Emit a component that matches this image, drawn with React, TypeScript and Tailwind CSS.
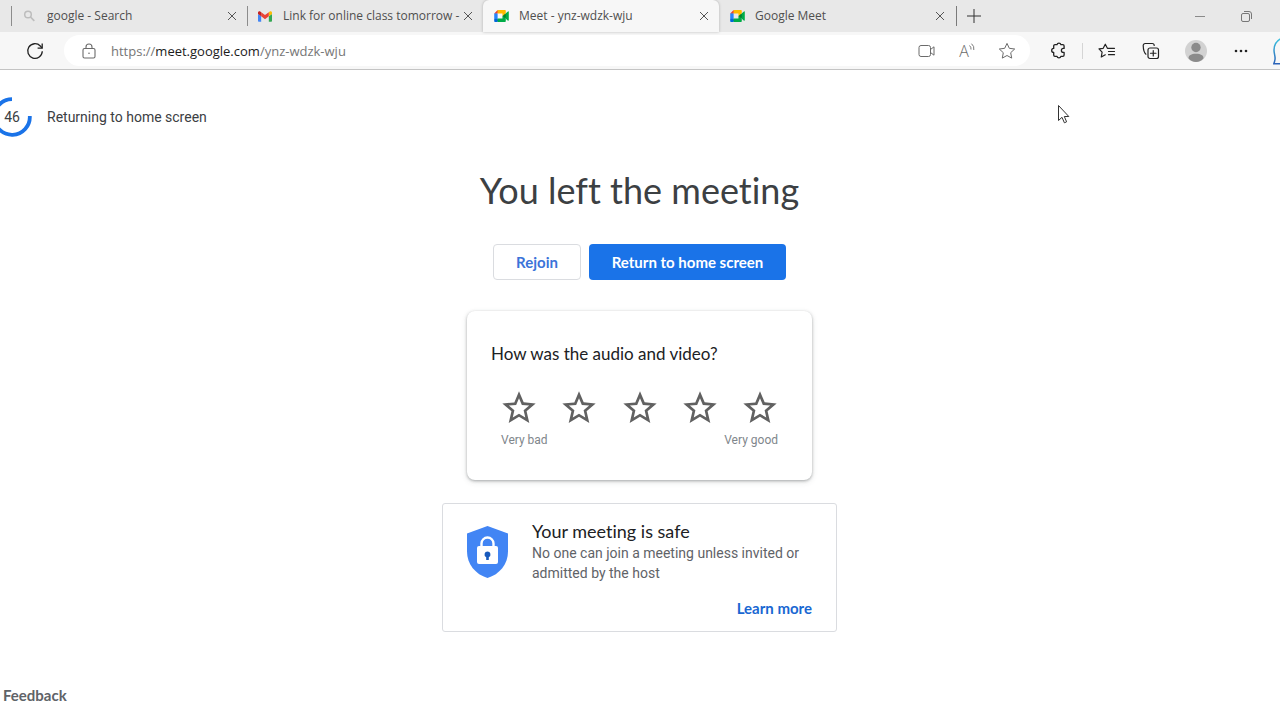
import type { ReactNode } from "react";

const CHROME_FONT = "font-['Open_Sans','Noto_Sans',sans-serif]";
const DISPLAY_FONT = "font-['Lato',sans-serif] [font-variant-ligatures:no-common-ligatures]";

function MeetLogo() {
  return (
    <svg viewBox="0 0 87.5 72" className="h-3 w-[15px]" aria-hidden="true">
      <path fill="#00832d" d="M49.5 36l8.53 9.75 11.47 7.33 2-17.02-2-16.64-11.69 6.44z" />
      <path fill="#0066da" d="M0 51.5V66c0 3.315 2.685 6 6 6h14.5l3-10.96-3-9.54-9.95-3z" />
      <path fill="#e94235" d="M20.5 0L0 20.5l10.55 3 9.95-3 2.95-9.41z" />
      <path fill="#2684fc" d="M20.5 20.5H0v31h20.5z" />
      <path
        fill="#00ac47"
        d="M82.6 8.68L69.5 19.42v33.66l13.16 10.79c1.97 1.54 4.85.135 4.85-2.37V11c0-2.535-2.945-3.925-4.91-2.32zM49.5 36v15.5h-29V72h43c3.315 0 6-2.685 6-6V53.08z"
      />
      <path fill="#ffba00" d="M63.5 0h-43v20.5h29V36l20-16.57V6c0-3.315-2.685-6-6-6z" />
    </svg>
  );
}

function GmailLogo() {
  return (
    <svg viewBox="52 42 88 66" className="h-[11px] w-[14px]" aria-hidden="true">
      <path fill="#4285f4" d="M58 108h14V74L52 59v43c0 3.320 2.690 6 6 6" />
      <path fill="#34a853" d="M120 108h14c3.320 0 6-2.690 6-6V59l-20 15" />
      <path fill="#fbbc04" d="M120 48v26l20-15v-8c0-7.420-8.470-11.650-14.400-7.200" />
      <path fill="#ea4335" d="M72 74V48l24 18 24-18v26L96 92" />
      <path fill="#c5221f" d="M52 51v8l20 15V48l-5.600-4.200c-5.940-4.450-14.400-.220-14.400 7.200" />
    </svg>
  );
}

function SearchGlyph() {
  return (
    <svg viewBox="0 0 14 14" className="h-3.5 w-3.5" fill="none" stroke="#bdbdbd" aria-hidden="true">
      <circle cx="6" cy="5.500" r="3.300" strokeWidth="1.500" />
      <path d="M8.500 8l3.800 3.800" strokeWidth="1.700" />
    </svg>
  );
}

interface TabProps {
  title: string;
  icon: ReactNode;
  variant?: "divided" | "active" | "plain";
}

const TAB_STYLES = {
  divided:
    "before:absolute before:left-0 before:top-1.5 before:h-5 before:w-px before:bg-[#8c8c8c]",
  active: "rounded-t-md bg-[#f7f7f7] shadow-[0_0_3px_rgba(0,0,0,0.25)]",
  plain: "",
};

function Tab({ title, icon, variant = "divided" }: TabProps) {
  return (
    <div
      className={`relative flex min-w-0 flex-[0_1_236px] items-center pl-[11px] pr-[7px] ${TAB_STYLES[variant]}`}
    >
      <button
        role="tab"
        aria-selected={variant === "active"}
        className="flex h-full min-w-0 flex-1 items-center text-left text-xs text-[#4f4f4f]"
      >
        <span className="flex w-[25px] shrink-0 items-center">{icon}</span>
        <span className="min-w-0 flex-1 overflow-hidden whitespace-nowrap">{title}</span>
      </button>
      <button aria-label={`Close ${title}`} className="flex h-4 w-4 shrink-0 items-center justify-center">
        <svg viewBox="0 0 10 10" className="h-2.5 w-2.5" stroke="#555" aria-hidden="true">
          <path d="M1 1l8 8M9 1L1 9" />
        </svg>
      </button>
    </div>
  );
}

function TabStrip() {
  return (
    <div className="flex h-8 justify-between bg-[#e8e8e8]">
      <div role="tablist" aria-label="Open tabs" className="flex min-w-0 flex-1 pl-[11px]">
        <Tab title="google - Search" icon={<SearchGlyph />} />
        <Tab title="Link for online class tomorrow -" icon={<GmailLogo />} />
        <Tab title="Meet - ynz-wdzk-wju" icon={<MeetLogo />} variant="active" />
        <Tab title="Google Meet" icon={<MeetLogo />} variant="plain" />
        <div className="flex items-center">
          <span className="ml-px h-5 w-px bg-[#7a7a7a]" />
          <button aria-label="New tab" className="ml-2 flex h-6 w-[18px] items-center justify-center">
            <svg viewBox="0 0 14 14" className="h-3.5 w-3.5" stroke="#333" aria-hidden="true">
              <path d="M7 0v14M0 7h14" />
            </svg>
          </button>
        </div>
      </div>
      <div className="flex items-center">
        <button aria-label="Minimize" className="flex h-full w-[46px] items-center justify-center">
          <span className="h-px w-2.5 bg-[#8a8a8a]" />
        </button>
        <button aria-label="Restore" className="mr-[11px] flex h-full w-[46px] items-center justify-center">
          <svg viewBox="0 0 11 11" className="h-[11px] w-[11px]" fill="none" stroke="#777" aria-hidden="true">
            <rect x=".5" y="2.500" width="8" height="8" rx="1.500" />
            <path d="M3 .5h5a2.500 2.500 0 0 1 2.500 2.500v5" />
          </svg>
        </button>
      </div>
    </div>
  );
}

function IconButton({ label, className, children }: { label: string; className: string; children: ReactNode }) {
  return (
    <button aria-label={label} className={`flex h-7 shrink-0 items-center justify-center ${className}`}>
      {children}
    </button>
  );
}

function Toolbar() {
  return (
    <div className="flex h-[38px] items-center overflow-hidden border-b border-[#c4c4c4] bg-[#f7f7f7]">
      <IconButton label="Refresh" className="ml-5 w-[30px]">
        <svg viewBox="0 0 18 18" className="h-[18px] w-[18px]" fill="none" stroke="#222" strokeWidth="1.300" aria-hidden="true">
          <path d="M16.300 9.300a7.300 7.300 0 1 1-2-5.300l1.700 1.900" />
          <path d="M16.200 1.500v4.600h-4.600" />
        </svg>
      </IconButton>
      <div className="ml-3.5 flex h-[31px] min-w-0 flex-1 items-center rounded-full bg-white">
        <IconButton label="Site information" className="ml-2.5 w-[30px]">
          <svg viewBox="0 0 14 16" className="h-4 w-3.5" fill="none" stroke="#6b6b6b" strokeWidth="1.100" aria-hidden="true">
            <rect x="1" y="5.500" width="12" height="9.500" rx="1.500" />
            <path d="M4 5.500V4a3 3 0 0 1 6 0v1.500" />
            <circle cx="7" cy="10.300" r=".8" fill="#6b6b6b" stroke="none" />
          </svg>
        </IconButton>
        <p className="ml-[7px] min-w-0 flex-1 truncate text-[13px] leading-5 text-[#767676]">
          https://<span className="text-[#1b1b1b]">meet.google.com</span>/ynz-wdzk-wju
        </p>
        <IconButton label="Camera permission" className="w-10">
          <svg viewBox="0 0 18 14" className="h-3.5 w-[18px]" fill="none" stroke="#6b6b6b" aria-hidden="true">
            <rect x="1" y="1.500" width="11.500" height="11" rx="2" />
            <path d="M12.500 5.500l3.500-2.700v8.400l-3.500-2.700" strokeLinejoin="round" />
          </svg>
        </IconButton>
        <IconButton label="Read aloud" className="w-10">
          <span className="text-base leading-none font-light text-[#6b6b6b]">A</span>
          <svg viewBox="0 0 6 8" className="mb-2 h-2 w-1.5" fill="none" stroke="#6b6b6b" strokeWidth=".9" aria-hidden="true">
            <path d="M.5 2.500a4.500 4.500 0 0 1 1.500 4M2.500.7a6.500 6.500 0 0 1 2.300 6.300" />
          </svg>
        </IconButton>
        <IconButton label="Add to favorites" className="mr-[3px] w-10">
          <svg viewBox="0 0 18 18" className="h-[18px] w-[18px]" fill="none" stroke="#6b6b6b" strokeLinejoin="round" aria-hidden="true">
            <path d="M9 1.400l2.300 4.900 5.400.7-4 3.700 1 5.400L9 13.500l-4.700 2.600 1-5.400-4-3.700 5.400-.7z" />
          </svg>
        </IconButton>
      </div>
      <IconButton label="Extensions" className="ml-2 w-10">
        <svg viewBox="0 0 17 17" className="h-[17px] w-[17px]" fill="none" stroke="#222" strokeWidth="1.300" strokeLinejoin="round" aria-hidden="true">
          <path d="M5 2.600h2a2 2 0 0 1 3.900 0h1.900a1.300 1.300 0 0 1 1.300 1.300v2.500h-.7a2 2 0 0 0 0 4h.7v2.600a1.300 1.300 0 0 1-1.300 1.300h-1.900a2 2 0 0 1-3.900 0H5a1.300 1.300 0 0 1-1.300-1.300v-2.600a2 2 0 0 1 0-4V3.900A1.300 1.300 0 0 1 5 2.600z" />
        </svg>
      </IconButton>
      <span className="ml-1 h-4 w-px shrink-0 bg-[#d5d5d5]" />
      <IconButton label="Favorites" className="ml-1 w-10">
        <svg viewBox="0 0 18 16" className="h-4 w-[18px]" fill="none" stroke="#222" strokeWidth="1.200" strokeLinejoin="round" strokeLinecap="round" aria-hidden="true">
          <path d="M16.500 5.300H9.400L7.300 1.200 5.200 5.300 1 5.900l3.100 3.200-.8 4.900 4-2.200" />
          <path d="M10.500 8.500h6M10.500 11.700h6" />
        </svg>
      </IconButton>
      <IconButton label="Collections" className="ml-1 w-10">
        <svg viewBox="0 0 18 18" className="h-[18px] w-[18px]" fill="none" stroke="#222" strokeWidth="1.200" strokeLinecap="round" aria-hidden="true">
          <rect x="6" y="6" width="10.500" height="10.500" rx="2" />
          <path d="M11.250 8.500v5.500M8.500 11.250H14" />
          <path d="M3.900 12.200C2.700 11.300 1.300 7 1.200 3.600a2 2 0 0 1 2-2.100h7a2 2 0 0 1 2 2" />
        </svg>
      </IconButton>
      <IconButton label="Profile" className="ml-[5px] w-10">
        <svg viewBox="0 0 22 22" className="h-[22px] w-[22px]" aria-hidden="true">
          <circle cx="11" cy="11" r="11" fill="#d2d2d2" />
          <circle cx="11" cy="7.500" r="4.700" fill="#8b8b8b" />
          <path d="M3.500 18.200c0-2.800 2.600-4.400 7.500-4.400s7.500 1.600 7.500 4.400C16.600 20.700 14 22 11 22s-5.600-1.300-7.500-3.800z" fill="#8b8b8b" />
        </svg>
      </IconButton>
      <IconButton label="Settings and more" className="ml-[5px] w-10">
        <svg viewBox="0 0 14 4" className="h-1 w-3.5" fill="#222" aria-hidden="true">
          <circle cx="2" cy="2" r="1.300" />
          <circle cx="7" cy="2" r="1.300" />
          <circle cx="12" cy="2" r="1.300" />
        </svg>
      </IconButton>
      <IconButton label="Discover" className="ml-3 w-[7px]">
        <svg viewBox="0 0 7 28" className="h-7 w-[7px]" fill="none" aria-hidden="true">
          <path d="M8 1.500C3 4 1 8 1 13c0 4 1.500 6 1 9.500-.2 1.600-.7 3-1.200 4.300H8" stroke="url(#bubble)" strokeWidth="1.500" />
          <defs>
            <linearGradient id="bubble" x1="0" y1="0" x2="0" y2="1">
              <stop offset="0" stopColor="#3cc4e0" />
              <stop offset="1" stopColor="#2b62b8" />
            </linearGradient>
          </defs>
        </svg>
      </IconButton>
    </div>
  );
}

function Countdown() {
  return (
    <div role="timer" className="-ml-2 flex items-center gap-[15px] text-sm leading-5 text-[#3c4043]">
      <div className="grid h-10 w-10 place-items-center">
        <svg viewBox="0 0 40 40" className="col-start-1 row-start-1 h-10 w-10" fill="none" aria-hidden="true">
          <path d="M20 2.200a17.800 17.800 0 1 0 17.800 16.800" stroke="#1a73e8" strokeWidth="3.800" />
        </svg>
        <span className="col-start-1 row-start-1">46</span>
      </div>
      <p>Returning to home screen</p>
    </div>
  );
}

function RatingCard() {
  return (
    <section className="mt-[31px] w-[345px] rounded-lg bg-white px-6 pb-[30px] pt-[31px] shadow-[0_1px_3px_rgba(60,64,67,0.4),0_2px_6px_rgba(60,64,67,0.12)]">
      <h2 className={`text-[17px] leading-6 text-[#202124] ${DISPLAY_FONT}`}>How was the audio and video?</h2>
      <div className="mt-[22px] flex justify-between px-2">
        {[1, 2, 3, 4, 5].map((n) => (
          <button key={n} aria-label={`Rate ${n} of 5`}>
            <svg viewBox="0 0 24 24" className="h-10 w-10" fill="#616161" aria-hidden="true">
              <path d="M22 9.240l-7.190-.62L12 2 9.190 8.630 2 9.240l5.460 4.730L5.820 21 12 17.270 18.180 21l-1.630-7.030L22 9.240zM12 15.400l-3.760 2.270 1-4.280-3.320-2.880 4.380-.38L12 6.100l1.710 4.040 4.380.38-3.320 2.880 1 4.280L12 15.400z" />
            </svg>
          </button>
        ))}
      </div>
      <div className="mt-0.5 flex justify-between px-2.5 text-xs leading-5 text-[#80868b]">
        <span>Very bad</span>
        <span>Very good</span>
      </div>
    </section>
  );
}

function SafetyCard() {
  return (
    <section className="mt-[23px] w-[395px] rounded-[3px] border border-[#dadce0] px-6 pb-[13px] pt-[15px]">
      <div className="flex gap-6">
        <svg viewBox="0 0 41 52" className="mt-[7px] h-[52px] w-[41px] shrink-0" aria-hidden="true">
          <path d="M20.500 0L41 7.500v18C41 38 32.500 48.500 20.500 52 8.500 48.500 0 38 0 25.500v-18z" fill="#4285f4" />
          <path d="M14.500 21v-3.500a6 6 0 0 1 12 0V21" fill="none" stroke="#fff" strokeWidth="2.400" />
          <rect x="10" y="20" width="21" height="18" rx="2" fill="#fff" />
          <path d="M20.500 25.500a3 3 0 0 1 1.300 5.700V34h-2.600v-2.800a3 3 0 0 1 1.300-5.700z" fill="#185abc" />
        </svg>
        <div>
          <h2 className={`text-lg leading-6 text-[#202124] ${DISPLAY_FONT}`}>Your meeting is safe</h2>
          <p className="text-sm leading-5 text-[#5f6368]">
            No one can join a meeting unless invited or admitted by the host
          </p>
        </div>
      </div>
      <div className={`mt-[15px] text-right text-[15px] leading-5 font-bold text-[#1967d2] ${DISPLAY_FONT}`}>
        <a href="#learn-more">Learn more</a>
      </div>
    </section>
  );
}

export default function App() {
  return (
    <div className="relative flex min-h-screen flex-col overflow-hidden bg-white font-['Roboto',sans-serif]">
      <header className={CHROME_FONT}>
        <TabStrip />
        <Toolbar />
      </header>
      <main className="flex flex-1 flex-col pt-[27px]">
        <Countdown />
        <div className="flex flex-col items-center pr-px">
          <h1 className={`mt-[31px] text-4xl leading-11 text-[#3c4043] ${DISPLAY_FONT}`}>You left the meeting</h1>
          <div className={`mt-8 flex gap-2 text-[15px] font-bold ${DISPLAY_FONT}`}>
            <button className="h-9 w-[88px] rounded border border-[#dadce0] text-[#3b73d9]">Rejoin</button>
            <button className="h-9 w-[197px] rounded bg-[#1a73e8] text-white">Return to home screen</button>
          </div>
          <RatingCard />
          <SafetyCard />
        </div>
      </main>
      <footer className="px-[3px] pb-3">
        <button className={`text-[15px] leading-5 font-bold text-[#5f6368] ${DISPLAY_FONT}`}>Feedback</button>
      </footer>
      <svg
        viewBox="0 0 13 20"
        className="pointer-events-none absolute right-[210px] top-[104px] h-5 w-[13px]"
        fill="#fff"
        stroke="#333"
        aria-hidden="true"
      >
        <path d="M1.500 1.500v15l3.500-3.200 2.400 5.500 2.200-1-2.300-5.300h4.500z" />
      </svg>
    </div>
  );
}
